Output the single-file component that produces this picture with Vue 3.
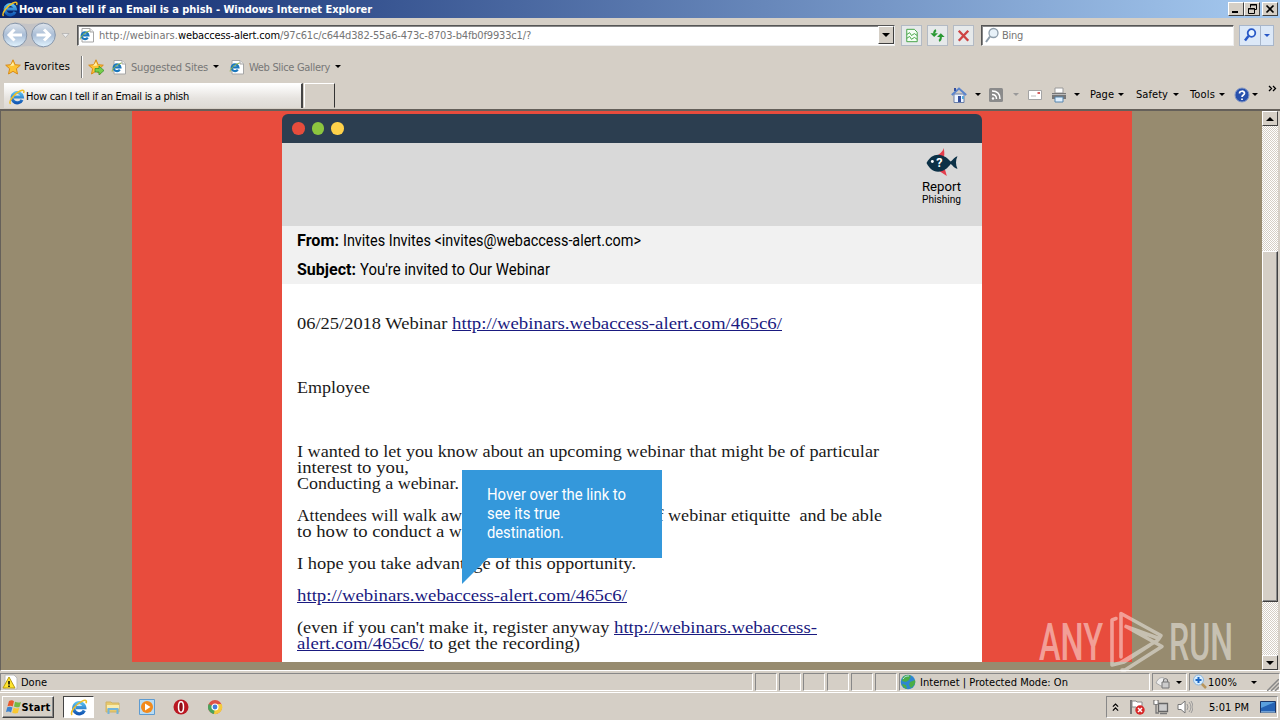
<template>
  <div class="desktop">
    <svg class="sprites">
      <linearGradient id="ie-blue" x1="0" y1="0" x2="0" y2="1">
        <stop offset="0" stop-color="#58bdf0" />
        <stop offset="1" stop-color="#1359b5" />
      </linearGradient>
      <symbol id="ie" viewBox="0 0 16 16">
        <path d="M13 10.800A5.200 5.200 0 1 1 13.400 8H5" fill="none" stroke="url(#ie-blue)" stroke-width="3.100" />
        <path d="M1.500 15C-.8 12.800 4.800 4.800 11 2c3-1.400 4.700-.9 3.600 2" fill="none" stroke="#f0be24" stroke-width="1.500" />
      </symbol>
      <symbol id="page" viewBox="0 0 16 16">
        <path d="M3 1.500h8l3.500 3.500v10H3z" fill="#fff" stroke="#a6a6a6" />
        <path d="M11 1.500V5h3.500" fill="#eee" stroke="#a6a6a6" />
        <path d="M8.800 10.700A3.400 3.400 0 1 1 9.400 8.300H4" fill="none" stroke="#1b78bd" stroke-width="2.200" />
        <path d="M1.200 12.500C1 10 6 5 10.500 4" fill="none" stroke="#8bb43c" />
      </symbol>
      <symbol id="star" viewBox="0 0 16 16">
        <path d="M8 .8l2.100 4.900 5.200.5-3.900 3.500 1.100 5.300L8 12.300 3.500 15l1.100-5.300L.7 6.200l5.200-.5z" fill="#fdc434" stroke="#d98a17" />
        <path d="M8 3l1.300 3.600L5 7z" fill="#fff0a8" />
      </symbol>
    </svg>

    <header class="titlebar chrome">
      <svg class="i16"><use href="#ie" /></svg>
      <span v-fit="353" class="title">How can I tell if an Email is a phish - Windows Internet Explorer</span>
      <div class="win-buttons">
        <button><svg viewBox="0 0 14 12"><path d="M3 9h6" stroke="#000" stroke-width="2" /></svg></button>
        <button>
          <svg viewBox="0 0 14 12"><path d="M5.500 4.500v-3h6v5h-2M5 2h7M3.500 5.500h6v5h-6zM3 6h7" fill="none" stroke="#000" /></svg>
        </button>
        <button class="x"><svg viewBox="0 0 14 12"><path d="M3.500 2.500l7 7m0-7l-7 7" stroke="#000" stroke-width="1.700" /></svg></button>
      </div>
    </header>

    <div class="address-row chrome">
      <svg class="nav" viewBox="0 0 74 30">
        <defs>
          <linearGradient id="ball" x1="0" y1="0" x2="0" y2="1">
            <stop offset="0" stop-color="#dfe5ec" />
            <stop offset=".5" stop-color="#a9bdd6" />
            <stop offset="1" stop-color="#e2f4ff" />
          </linearGradient>
        </defs>
        <path d="M15 2q14 4 28 0l13 13-13 13q-14-4-28 0L2 15z" fill="#c4c3c5" />
        <circle cx="15" cy="15" r="11.800" fill="url(#ball)" stroke="#8796aa" />
        <circle cx="43.500" cy="15" r="11.800" fill="url(#ball)" stroke="#8796aa" />
        <path d="M22 15H9m5.500-5.500L9 15l5.500 5.500M36.500 15h13M44 9.500l5.500 5.500-5.500 5.500" fill="none" stroke="#fff" stroke-width="3" />
        <path d="M62 13.500h7l-3.500 4z" fill="#eee" stroke="#aaa" stroke-width=".7" />
      </svg>
      <div class="field url">
        <svg class="i16"><use href="#page" /></svg>
        <div class="url-text">
          <span v-fit="79">http://webinars.</span><span v-fit="102" class="host">webaccess-alert.com</span><span v-fit="251">/97c61c/c644d382-55a6-473c-8703-b4fb0f9933c1/?</span>
        </div>
        <button class="drop"><i class="caret"></i></button>
      </div>
      <button class="tool">
        <svg viewBox="0 0 20 20"><path d="M5 3.500h8l3 3v10H5z" fill="#f4fff4" stroke="#41a042" /><path d="M5 9l3-2 2 3 3-2 3 2M5 13l3-2 2 3 3-2 3 2" fill="none" stroke="#41a042" /></svg>
      </button>
      <button class="tool">
        <svg viewBox="0 0 20 20"><path d="M8.500 4.500Q6.500 5 6.500 8M11.500 15.500q2-.5 2-4" fill="none" stroke="#299832" stroke-width="2.200" /><path d="M2.500 7.500h8l-4 4zM9.500 11.500h8l-4-4z" fill="#299832" /></svg>
      </button>
      <button class="tool">
        <svg viewBox="0 0 20 20"><path d="M5 5l10 10.500M15 5L5 15.500" stroke="#ce4444" stroke-width="2.500" /></svg>
      </button>
      <div class="field search">
        <svg class="i16" viewBox="0 0 16 16"><circle cx="9.500" cy="6" r="4.500" fill="#e8f1f8" stroke="#8e9daa" stroke-width="1.300" /><path d="M6 9.500L2 15" stroke="#8e9daa" stroke-width="2" /></svg>
        <span v-fit="21">Bing</span>
      </div>
      <button class="go">
        <svg class="i16" viewBox="0 0 16 16"><circle cx="9.500" cy="6" r="3.800" fill="#e8f4ff" stroke="#2858c7" stroke-width="1.800" /><path d="M6.500 9L3 13.500" stroke="#2858c7" stroke-width="2.500" /></svg>
        <span class="go-drop"><i class="caret"></i></span>
      </button>
    </div>

    <div class="favorites">
      <svg class="i16"><use href="#star" /></svg>
      <span v-fit="46" class="fav-label">Favorites</span>
      <i class="sep"></i>
      <svg class="i16" viewBox="0 0 16 16"><use href="#star" /><path d="M7 9.500h4V7l5 4.500-5 4.500v-3H7z" fill="#76cf4b" stroke="#318b29" stroke-width=".7" /></svg>
      <svg class="i16 sites"><use href="#page" /></svg>
      <span v-fit="77" class="muted">Suggested Sites</span><i class="caret"></i>
      <svg class="i16 slice"><use href="#page" /></svg>
      <span v-fit="81" class="muted">Web Slice Gallery</span><i class="caret"></i>
    </div>

    <div class="tab-row">
      <div class="tab"><svg class="i16"><use href="#ie" /></svg><span v-fit="163">How can I tell if an Email is a phish</span></div>
      <div class="new-tab"></div>
      <div class="commands">
        <svg class="home" viewBox="0 0 16 16"><path d="M3 7h10v8.500H3z" fill="#eef5ff" stroke="#6a7fa9" /><path d="M.8 8L8 1.500 15.200 8" fill="none" stroke="#5b84cc" stroke-width="2" /><path d="M3 1h2v3H3zM7 9h3v6H7z" fill="#354f9d" /><path d="M11 9h2v3h-2z" fill="#58aadd" /></svg>
        <i class="caret"></i>
        <svg class="rss" viewBox="0 0 16 16"><rect x="1" y="1" width="14" height="14" rx="1.500" fill="#8b8b8b" /><path d="M4 4c5 0 8 3 8 8M4 7.500c3 0 4.500 1.500 4.500 4.500" fill="none" stroke="#fff" stroke-width="1.500" /><circle cx="5" cy="11.500" r="1.200" fill="#fff" /></svg>
        <i class="caret dim"></i>
        <svg class="mail-icon" viewBox="0 0 16 16"><path d="M1.500 3.500h13v9h-13z" fill="#fff" stroke="#a4a4a4" /><path d="M10.500 5h2.500v2h-2.500z" fill="#d56060" /><path d="M4 9h5" stroke="#bbb" /></svg>
        <svg class="printer" viewBox="0 0 16 16"><path d="M4 1h8v5H4z" fill="#fff" stroke="#999" /><path d="M1 6h14v6H1z" fill="#777" /><path d="M1 7.500h14" stroke="#bbb" /><path d="M4 10h8v5H4z" fill="#dff0ff" stroke="#5685ad" /></svg>
        <i class="caret"></i>
        <span v-fit="24" class="page-cmd">Page</span><i class="caret"></i>
        <span v-fit="32" class="safety-cmd">Safety</span><i class="caret"></i>
        <span v-fit="25" class="tools-cmd">Tools</span><i class="caret"></i>
        <svg class="help" viewBox="0 0 16 16"><circle cx="8" cy="8" r="7" fill="#2850ac" stroke="#8398c5" /><path d="M5.500 6.500C5.500 3.500 10.500 3.500 10.500 6.300 10.500 8 8 8 8 10M8 11.500v1.500" fill="none" stroke="#fff" stroke-width="1.700" /></svg>
        <i class="caret"></i>
        <svg class="more" viewBox="0 0 8 8"><path d="M.5 1L3 3.500.5 6M4.500 1L7 3.500 4.500 6" fill="none" stroke="#000" stroke-width="1.300" /></svg>
      </div>
    </div>

    <main class="viewport">
      <div class="site">
        <div class="red">
          <section class="mail">
            <div class="mail-top"><i class="dot r"></i><i class="dot g"></i><i class="dot y"></i></div>
            <div class="mail-tools">
              <div class="report">
                <svg viewBox="0 0 34 30">
                  <path d="M12 8c2-2 5-3 7-8 0 3 1 6 0 9zM13 23l9 6-2-7z" fill="#e43d4c" />
                  <path d="M1 15.500C4 10 8 7 13 7c6 0 10 4 13 7 2-1 3-4 7-5.500-2 4-2 9 0 13-4-1-5-4-7-5-3 4-7 8-13 8S4 21 1 15.500z" fill="#0c3147" />
                  <circle cx="7" cy="14" r="1.500" fill="#fff" />
                  <text x="11" y="20" class="qmark">?</text>
                </svg>
                <span v-fit:scale="39" class="report-a">Report</span>
                <span v-fit:scale="39" class="report-b">Phishing</span>
              </div>
            </div>
            <div class="mail-head">
              <div><b v-fit:scale="42">From:</b><span v-fit:scale="298" class="gap">Invites Invites &lt;invites@webaccess-alert.com&gt;</span></div>
              <div><b v-fit:scale="59">Subject:</b><span v-fit:scale="190" class="gap">You're invited to Our Webinar</span></div>
            </div>
            <div class="mail-body">
              <div v-for="(line, i) in lines" :key="i" class="line">
                <component :is="part.link ? 'a' : 'span'" v-for="part in line" :key="part.text" v-fit:scale="part.w">{{ part.text }}</component>
              </div>
              <div class="tip">
                <span v-fit:scale="139">Hover over the link to</span>
                <span v-fit:scale="73">see its true</span>
                <span v-fit:scale="77">destination.</span>
                <svg class="tail" viewBox="0 0 26 26"><path d="M0 0h26L0 26z" fill="#3498db" /></svg>
              </div>
            </div>
          </section>
        </div>
      </div>
      <div class="scroll">
        <button><i class="caret up"></i></button>
        <div class="track"><div class="thumb"></div></div>
        <button><i class="caret"></i></button>
      </div>
      <svg class="watermark" viewBox="0 0 210 76">
        <g fill="#fff" fill-opacity=".48">
          <text x="9" y="57" textLength="64" lengthAdjust="spacingAndGlyphs">ANY</text>
          <text x="139" y="57" textLength="64" lengthAdjust="spacingAndGlyphs">RUN</text>
        </g>
        <path d="M86 15.500l-4 1.500v45l8-2 38-23M91 54V10.500l40 22-2 3-33-12 M96 23.500l36 20-37 23.500h-3M82 62l12-3 26-17" fill="none" stroke="#fff" stroke-opacity=".46" stroke-width="3.600" stroke-linejoin="round" stroke-linecap="round" />
      </svg>
    </main>

    <footer class="status chrome">
      <div class="cell done">
        <svg class="i16" viewBox="0 0 16 16"><path d="M3 1h9l3 3v11H3z" fill="#fff" stroke="#bbb" /><path d="M7 3l6 11H1z" fill="#ffe52d" stroke="#b79b12" /><path d="M7 7v3.500M7 11.500v1.500" stroke="#000" stroke-width="1.500" /></svg>
        <span v-fit="26">Done</span>
      </div>
      <div v-for="n in 6" :key="n" class="cell small"></div>
      <div class="cell zone">
        <svg class="i16" viewBox="0 0 16 16"><circle cx="8" cy="8" r="7.300" fill="#2d86d0" /><path d="M3 3c3-3 6-2 8-1L9 6 6 8 2 7zM10 8l5-2c1 3-1 6-4 8l-2-3zM2 10l4 1 1 4c-3-1-4-2-5-5z" fill="#4aad46" /><path d="M3 5c2-3 4-3 6-3" fill="none" stroke="#bce5ff" /></svg>
        <span v-fit="148">Internet | Protected Mode: On</span>
      </div>
      <div class="cell lock">
        <svg class="i16" viewBox="0 0 16 16"><path d="M1 9c2-5 5-6 8-5v8H6z" fill="#eee" stroke="#aaa" /><path d="M7 8h7v6H7zM8.500 8V5.500q2-2 4 0V8" fill="#ccc" stroke="#777" /></svg>
        <i class="caret"></i>
      </div>
      <div class="cell zoom">
        <svg class="i16" viewBox="0 0 16 16"><path d="M9 9l5 5" stroke="#b9955b" stroke-width="2.500" /><circle cx="6.500" cy="6" r="5" fill="#d6edff" stroke="#8eb6dc" /><path d="M6.500 3v6M3.500 6h6" stroke="#1c67c4" stroke-width="2" /></svg>
        <span v-fit="29">100%</span><i class="caret"></i>
        <svg class="grip" viewBox="0 0 12 12"><path d="M0 12L12 0M4 12l8-8M8 12l4-4" stroke="#888" stroke-width="1.500" /></svg>
      </div>
    </footer>

    <nav class="taskbar chrome">
      <button class="start">
        <svg class="i16" viewBox="0 0 16 16"><path d="M3 2q3-1.500 5 .2L6.700 7.500Q4.500 6 1.500 7.200z" fill="#e9592b" /><path d="M9 2.700q3 1.300 6 .2l-1.500 5q-3 1-5.500-.3z" fill="#75b943" /><path d="M1.200 8.300q3-1.300 5.200.3L5 13.500Q3 12 0 13z" fill="#3d83cf" /><path d="M7.600 8.800q3 1.300 5.600.3l-1.400 5q-3 1-5.600-.3z" fill="#f9c730" /></svg>
        <span v-fit="29">Start</span>
      </button>
      <div class="task"><svg><use href="#ie" /></svg></div>
      <svg class="i16 app" viewBox="0 0 16 16"><path d="M1 3h5l1 1h7v9H1z" fill="#e8c96b" stroke="#cfb266" /><path d="M2 6h12v4H2z" fill="#f9ecad" /><path d="M3.500 15v-5h9v5" fill="none" stroke="#71b4dc" stroke-width="2" /></svg>
      <svg class="i16 app" viewBox="0 0 16 16"><path d="M.5.5h15v15H.5z" fill="#b8dcf4" stroke="#5e9bd0" /><circle cx="8" cy="8" r="6" fill="#f28a1c" /><path d="M6 4.500v7L11.500 8z" fill="#fff" /></svg>
      <svg class="i16 app" viewBox="0 0 16 16"><circle cx="8" cy="8" r="7.500" fill="#ba1822" /><ellipse cx="8" cy="8" rx="2.500" ry="5.200" fill="#8e0e17" stroke="#fff" stroke-width="1.500" /></svg>
      <svg class="i16 app" viewBox="0 0 16 16"><circle cx="8" cy="8" r="7" fill="#de5145" /><path d="M8 8L1.700 5A7 7 0 0 0 7 15l3.500-6z" fill="#48a45d" /><path d="M8 8l3-3h3.500A7 7 0 0 1 7 15z" fill="#f5ca3d" /><circle cx="8" cy="8" r="3" fill="#437edb" stroke="#fff" stroke-width="1.200" /></svg>
      <div class="tray">
        <svg class="chev" viewBox="0 0 8 10"><path d="M1 4l3-3 3 3M1 8.500l3-3 3 3" fill="none" stroke="#000" stroke-width="1.400" /></svg>
        <svg class="i16 flag" viewBox="0 0 16 16"><path d="M2 1v14" stroke="#777" stroke-width="2" /><path d="M3 2h4l1 1h5v6H8L7 8H3z" fill="#fff" stroke="#888" /><circle cx="11" cy="11" r="4.700" fill="#d72727" /><path d="M9 9l4 4m0-4l-4 4" stroke="#fff" stroke-width="1.500" /></svg>
        <svg class="i16 net" viewBox="0 0 16 16"><path d="M5.500 4.500h9v8h-9z" fill="#ccc" stroke="#666" stroke-width="1.300" /><path d="M7 14.500h7M1 1v4h4V1M3 5v9h3" fill="none" stroke="#777" stroke-width="1.300" /><path d="M1.500 2h3v3h-3z" fill="#fff" /></svg>
        <svg class="i16 vol" viewBox="0 0 16 16"><path d="M1 5.500h3L8 2v12L4 10.500H1z" fill="#fff" stroke="#777" /><path d="M10 5q2 3 0 6M12 3q4 5 0 10M14 2q4 6 0 12" fill="none" stroke="#999" /></svg>
        <span v-fit="40" class="clock">5:01 PM</span>
        <svg class="i16 desk" viewBox="0 0 16 16"><path d="M.5 2.500h15v11H.5z" fill="#2462b4" stroke="#1b3668" /><path d="M1 3h14L1 9z" fill="#5aa0de" /><path d="M1 13h14" stroke="#b8dcf4" /></svg>
      </div>
    </nav>
  </div>
</template>

<script setup>
const url = 'http://webinars.webaccess-alert.com/465c6/'

const lines = [
  [{ text: '06/25/2018 Webinar ', w: 155 }, { text: url, w: 330, link: true }],
  [], [], [],
  [{ text: 'Employee', w: 73 }],
  [], [], [],
  [{ text: 'I wanted to let you know about an upcoming webinar that might be of particular', w: 582 }],
  [{ text: 'interest to you,', w: 112 }],
  [{ text: 'Conducting a webinar.', w: 162 }],
  [],
  [
    { text: 'Attendees will walk ', w: 144 },
    { text: 'away with an understanding of ', w: 227 },
    { text: 'webinar etiquitte  and be able', w: 214 }
  ],
  [{ text: 'to how to conduct a ', w: 152 }, { text: 'webinar.', w: 60 }],
  [],
  [{ text: 'I hope you take advantage of this opportunity.', w: 339 }],
  [],
  [{ text: url, w: 330, link: true }],
  [],
  [{ text: "(even if you can't make it, register anyway ", w: 317 }, { text: 'http://webinars.webaccess-', w: 203, link: true }],
  [{ text: 'alert.com/465c6/', w: 127, link: true }, { text: ' to get the recording)', w: 156 }]
]

// Fits a run of text to a pixel width, by tracking or by condensing the glyphs
const vFit = {
  mounted(el, { value, arg }) {
    const width = el.getBoundingClientRect().width
    if (arg === 'scale') {
      el.style.transform = `scaleX(${value / width})`
      el.style.marginRight = `${value - width}px`
    } else {
      el.style.letterSpacing = `${(value - width) / el.textContent.length}px`
    }
  }
}
</script>

<style>
body {
  overflow: hidden;
}
</style>

<style scoped>
.desktop {
  position: relative;
  width: 1280px;
  height: 720px;
  display: flex;
  flex-direction: column;
  overflow: hidden;
  background: #d5cfc6;
  color: #000;
  font: 11px/14px "DejaVu Sans Condensed", "DejaVu Sans", sans-serif;
}

* {
  box-sizing: border-box;
}

span,
b,
a {
  display: inline-block;
  flex: none;
  white-space: pre;
  transform-origin: 0 50%;
}

svg {
  flex: none;
  display: block;
}

button {
  font: inherit;
  padding: 0;
  border: 1px solid;
  border-color: #fff #404040 #404040 #fff;
  background: #d5cfc6;
  display: flex;
  align-items: center;
  justify-content: center;
}

.sprites {
  position: absolute;
  width: 0;
  height: 0;
}

.i16 {
  width: 16px;
  height: 16px;
}

.chrome span:not(.go-drop) {
  margin-top: 2px;
}

.caret {
  flex: none;
  width: 0;
  height: 0;
  border: 3px solid transparent;
  border-top-color: #000;
  border-bottom: 0;
}

.caret.up {
  border-width: 0 4px 4px;
  border-bottom: 4px solid #000;
}

.caret.dim {
  border-top-color: #999;
}

.titlebar {
  height: 18px;
  flex: none;
  display: flex;
  align-items: center;
  padding: 0 2px;
  background: linear-gradient(90deg, #0a246a, #a6caf0);
  color: #fff;
}

.title {
  margin-left: 1px;
  font-weight: bold;
}

.win-buttons {
  display: flex;
  margin-left: auto;
}

.win-buttons button {
  width: 16px;
  height: 14px;
}

.win-buttons .x {
  margin-left: 2px;
}

.win-buttons svg {
  width: 14px;
  height: 12px;
}

.address-row {
  height: 34px;
  flex: none;
  display: flex;
  align-items: center;
}

.nav {
  width: 74px;
  height: 30px;
}

.field {
  height: 21px;
  display: flex;
  align-items: center;
  background: #fff;
  border: 1px solid;
  border-color: #555 #eee #eee #555;
  box-shadow: inset 1px 1px #888;
  color: #757575;
}

.url {
  width: 818px;
  margin-left: 3px;
  padding-left: 1px;
}

.url-text {
  display: flex;
  margin-left: 4px;
}

.host {
  color: #000;
}

.drop {
  width: 16px;
  height: 18px;
  margin-left: auto;
}

.drop .caret,
.scroll .caret:not(.up) {
  border-width: 4px 4px 0;
}

.tool {
  width: 21px;
  height: 21px;
  margin-left: 5px;
  background: #e6e9ea;
  border-color: #b3bac4;
}

.url + .tool {
  margin-left: 6px;
}

.tool svg {
  width: 19px;
  height: 19px;
}

.search {
  width: 253px;
  margin-left: 7px;
  padding-left: 2px;
}

.search span {
  margin-left: 2px;
}

.go {
  width: 35px;
  height: 21px;
  margin-left: 5px;
  background: #dce8f7;
  border-color: #a8b6ca;
}

.go-drop {
  border-left: 1px solid #a8b6ca;
  margin-left: 2px;
  height: 19px;
  padding: 8px 1px 0 3px;
}

.go .caret {
  display: block;
  border-top-color: #2858c7;
}

.favorites {
  height: 29px;
  flex: none;
  display: flex;
  align-items: center;
  padding-left: 5px;
}

.fav-label {
  margin-left: 3px;
}

.sep {
  height: 22px;
  margin: 0 5px 0 11px;
  border-left: 1px solid #777;
  border-right: 1px solid #fff;
}

.sites {
  margin-left: 7px;
}

.muted {
  margin: 2px 5px 0 4px;
  color: #777;
}

.slice {
  margin-left: 10px;
}

.tab-row {
  height: 28px;
  flex: none;
  display: flex;
  padding-left: 4px;
}

.tab {
  width: 299px;
  height: 25px;
  margin-top: 2px;
  display: flex;
  align-items: center;
  padding: 1px 0 0 5px;
  background: linear-gradient(#fff, #e6e3df 60%, #dedad4);
  border-top: 1px solid #fff;
  border-right: 2px solid #444;
}

.tab span {
  margin-left: 1px;
}

.new-tab {
  width: 31px;
  height: 25px;
  margin: 2px 0 0 1px;
  border: 1px solid;
  border-color: #fff #333 transparent #fff;
}

.commands {
  flex: 1;
  display: flex;
  align-items: center;
  padding-bottom: 1px;
}

.commands svg {
  width: 16px;
  height: 16px;
}

.commands .home {
  margin: 0 8px 0 616px;
}

.commands .rss {
  margin: 0 9px 0 7px;
}

.commands .mail-icon {
  margin-left: 8px;
}

.commands .printer {
  margin: 0 7px 0 8px;
}

.page-cmd {
  margin: 0 4px 0 10px;
}

.safety-cmd,
.tools-cmd {
  margin: 0 5px 0 12px;
}

.tools-cmd {
  margin: 0 4px 0 11px;
}

.commands .help {
  margin: 0 2px 0 9px;
}

.commands .more {
  width: 9px;
  height: 8px;
  margin: 0 0 12px 10px;
}

.viewport {
  position: relative;
  height: 562px;
  flex: none;
  display: flex;
  border-top: 2px solid #65605a;
  border-left: 1px solid #65605a;
  border-bottom: 1px solid #fff;
}

.site {
  width: 1261px;
  display: flex;
  background: #978b6f;
}

.red {
  width: 1000px;
  height: 551px;
  margin: 0 0 0 131px;
  padding: 3px 150px 0;
  background: #e84c3d;
}

.mail {
  width: 700px;
}

.mail-top {
  height: 29px;
  display: flex;
  align-items: center;
  padding-left: 10px;
  gap: 7px;
  background: #2c3e50;
  border-radius: 6px 6px 0 0;
}

.dot {
  width: 12.500px;
  height: 12.500px;
  border-radius: 50%;
}

.r { background: #e74c3c; }
.g { background: #8cc63f; }
.y { background: #ffd24a; }

.mail-tools {
  height: 83px;
  display: flex;
  justify-content: flex-end;
  padding: 5px 0 0 0;
  background: #d9d9d9;
}

.report {
  width: 60px;
  display: flex;
  flex-direction: column;
  align-items: flex-start;
  font-family: Roboto, sans-serif;
}

.report svg {
  width: 34px;
  height: 29px;
  margin-left: 3px;
}

.report-a {
  font-size: 13px;
  line-height: 16px;
  margin-top: 2px;
}

.report-b {
  font-size: 10px;
  line-height: 10px;
}

.qmark {
  fill: #fff;
  font: bold 13px Roboto, sans-serif;
}

.mail-head {
  height: 58px;
  padding-left: 15px;
  background: #f1f1f1;
  font: 16px/29px Roboto, sans-serif;
}

.mail-head div {
  display: flex;
  height: 29px;
}

.gap {
  margin-left: 4px;
}

.mail-body {
  position: relative;
  height: 378px;
  padding: 32px 0 0 15px;
  background: #fff;
  color: #1a1a1a;
  font: 17px/16px "Liberation Serif", serif;
}

.line {
  height: 16px;
  display: flex;
}

.line a {
  color: #1a1a80;
  text-decoration: underline;
}

.tip {
  position: absolute;
  left: 180px;
  top: 186px;
  width: 200px;
  height: 88px;
  padding: 15px 25px;
  display: flex;
  flex-direction: column;
  align-items: flex-start;
  background: #3498db;
  color: #fff;
  font: 16px/19px Roboto, sans-serif;
}

.tail {
  position: absolute;
  left: 0;
  top: 88px;
  width: 26px;
  height: 26px;
}

.scroll {
  width: 16px;
  display: flex;
  flex-direction: column;
}

.scroll button {
  height: 15px;
  flex: none;
}

.track {
  flex: 1;
  padding-top: 125px;
  background: repeating-conic-gradient(#fff 0 25%, #d5cfc6 0 50%) 0 0 / 2px 2px;
}

.thumb {
  height: 351px;
  background: #d5cfc6;
  border: 1px solid;
  border-color: #fff #404040 #404040 #fff;
  box-shadow: inset -1px -1px #888;
}

.watermark {
  position: absolute;
  left: 1029px;
  top: 492px;
  width: 210px;
  height: 76px;
  font: 500 51px Roboto, sans-serif;
}

.status {
  height: 22px;
  flex: none;
  display: flex;
  gap: 2px;
  padding: 2px 0 1px;
  border-bottom: 1px solid #fff;
}

.cell {
  display: flex;
  align-items: center;
  border: 1px solid;
  border-color: #888 #fff #fff #888;
}

.done {
  width: 753px;
  padding-left: 1px;
}

.done span {
  margin-left: 3px;
}

.small {
  width: 22px;
}

.zone {
  width: 251px;
}

.zone span {
  margin-left: 4px;
}

.lock {
  width: 35px;
  padding-left: 2px;
  gap: 5px;
}

.zoom {
  flex: 1;
  padding-left: 2px;
}

.zoom .caret {
  margin-left: 14px;
}

.grip {
  width: 12px;
  height: 12px;
  margin: 5px 0 0 auto;
}

.taskbar {
  flex: 1;
  display: flex;
  align-items: center;
  padding: 1px 2px 0;
}

.start {
  width: 52px;
  height: 22px;
  font-weight: bold;
  box-shadow: inset -1px -1px #888;
}

.task {
  width: 31px;
  height: 22px;
  margin: 0 11px 0 9px;
  padding: 2px 6px;
  background: #fff;
  border: 1px solid;
  border-color: #444 #fff #fff #444;
}

.task svg {
  width: 18px;
  height: 17px;
}

.app {
  margin-right: 18px;
}

.tray {
  width: 172px;
  height: 22px;
  margin-left: auto;
  display: flex;
  align-items: center;
  border: 1px solid;
  border-color: #888 #fff #fff #888;
}

.chev {
  width: 7px;
  height: 9px;
  margin-left: 5px;
}

.flag {
  margin-left: 10px;
}

.net,
.vol {
  margin-left: 8px;
}

.clock {
  margin-left: 16px;
}

.desk {
  margin-left: 11px;
}
</style>
